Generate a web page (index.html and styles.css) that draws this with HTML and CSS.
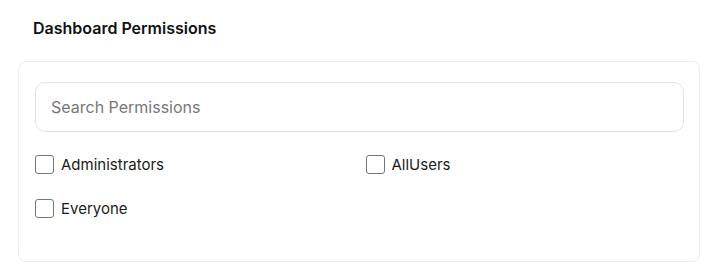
FILE: index.html
```html
<!DOCTYPE html>
<html lang="en">
<head>
    <meta charset="UTF-8">
    <title>Dashboard Permissions</title>
    <link rel="stylesheet" href="styles.css">
</head>
<body>

    <section class="permissions">
        <h2>Dashboard Permissions</h2>

        <div class="card">
            <input class="search" type="text" placeholder="Search Permissions">

            <div class="options">
                <label class="option"><input type="checkbox"> <span>Administrators</span></label>
                <label class="option"><input type="checkbox"> <span>AllUsers</span></label>
                <label class="option"><input type="checkbox"> <span>Everyone</span></label>
            </div>
        </div>
    </section>

</body>
</html>
```

FILE: styles.css
```css
body {
    font-family: Inter, "Noto Sans", sans-serif;
    background: #fff;
    color: #111;
    margin: 0;
    padding: 0;
}

.permissions {
    padding: 18px 6px 0 18px;
}

.permissions h2 {
    font-size: 16px;
    font-weight: 600;
    margin: 0 0 23px 15px;
    line-height: 20px;
}

.card {
    border: 1px solid #ececec;
    border-radius: 8px;
    padding: 20px 15px 43px 16px;
}

.search {
    display: block;
    width: 100%;
    box-sizing: border-box;
    height: 50px;
    border: 1px solid #e3e3e3;
    border-radius: 10px;
    padding: 0 15px;
    font-family: inherit;
    font-size: 16px;
    color: #333;
    outline: none;
}

.search::placeholder {
    color: #777;
}

.options {
    display: grid;
    grid-template-columns: 1fr 1fr;
    column-gap: 12px;
    row-gap: 24px;
    margin-top: 22px;
}

.option {
    display: flex;
    align-items: center;
    gap: 7px;
    font-size: 15px;
    color: #1a1a1a;
    height: 20px;
}

.option input {
    appearance: none;
    width: 19px;
    height: 19px;
    margin: 0;
    border: 1.5px solid #767676;
    border-radius: 3px;
    background: #fff;
    cursor: pointer;
}
```
